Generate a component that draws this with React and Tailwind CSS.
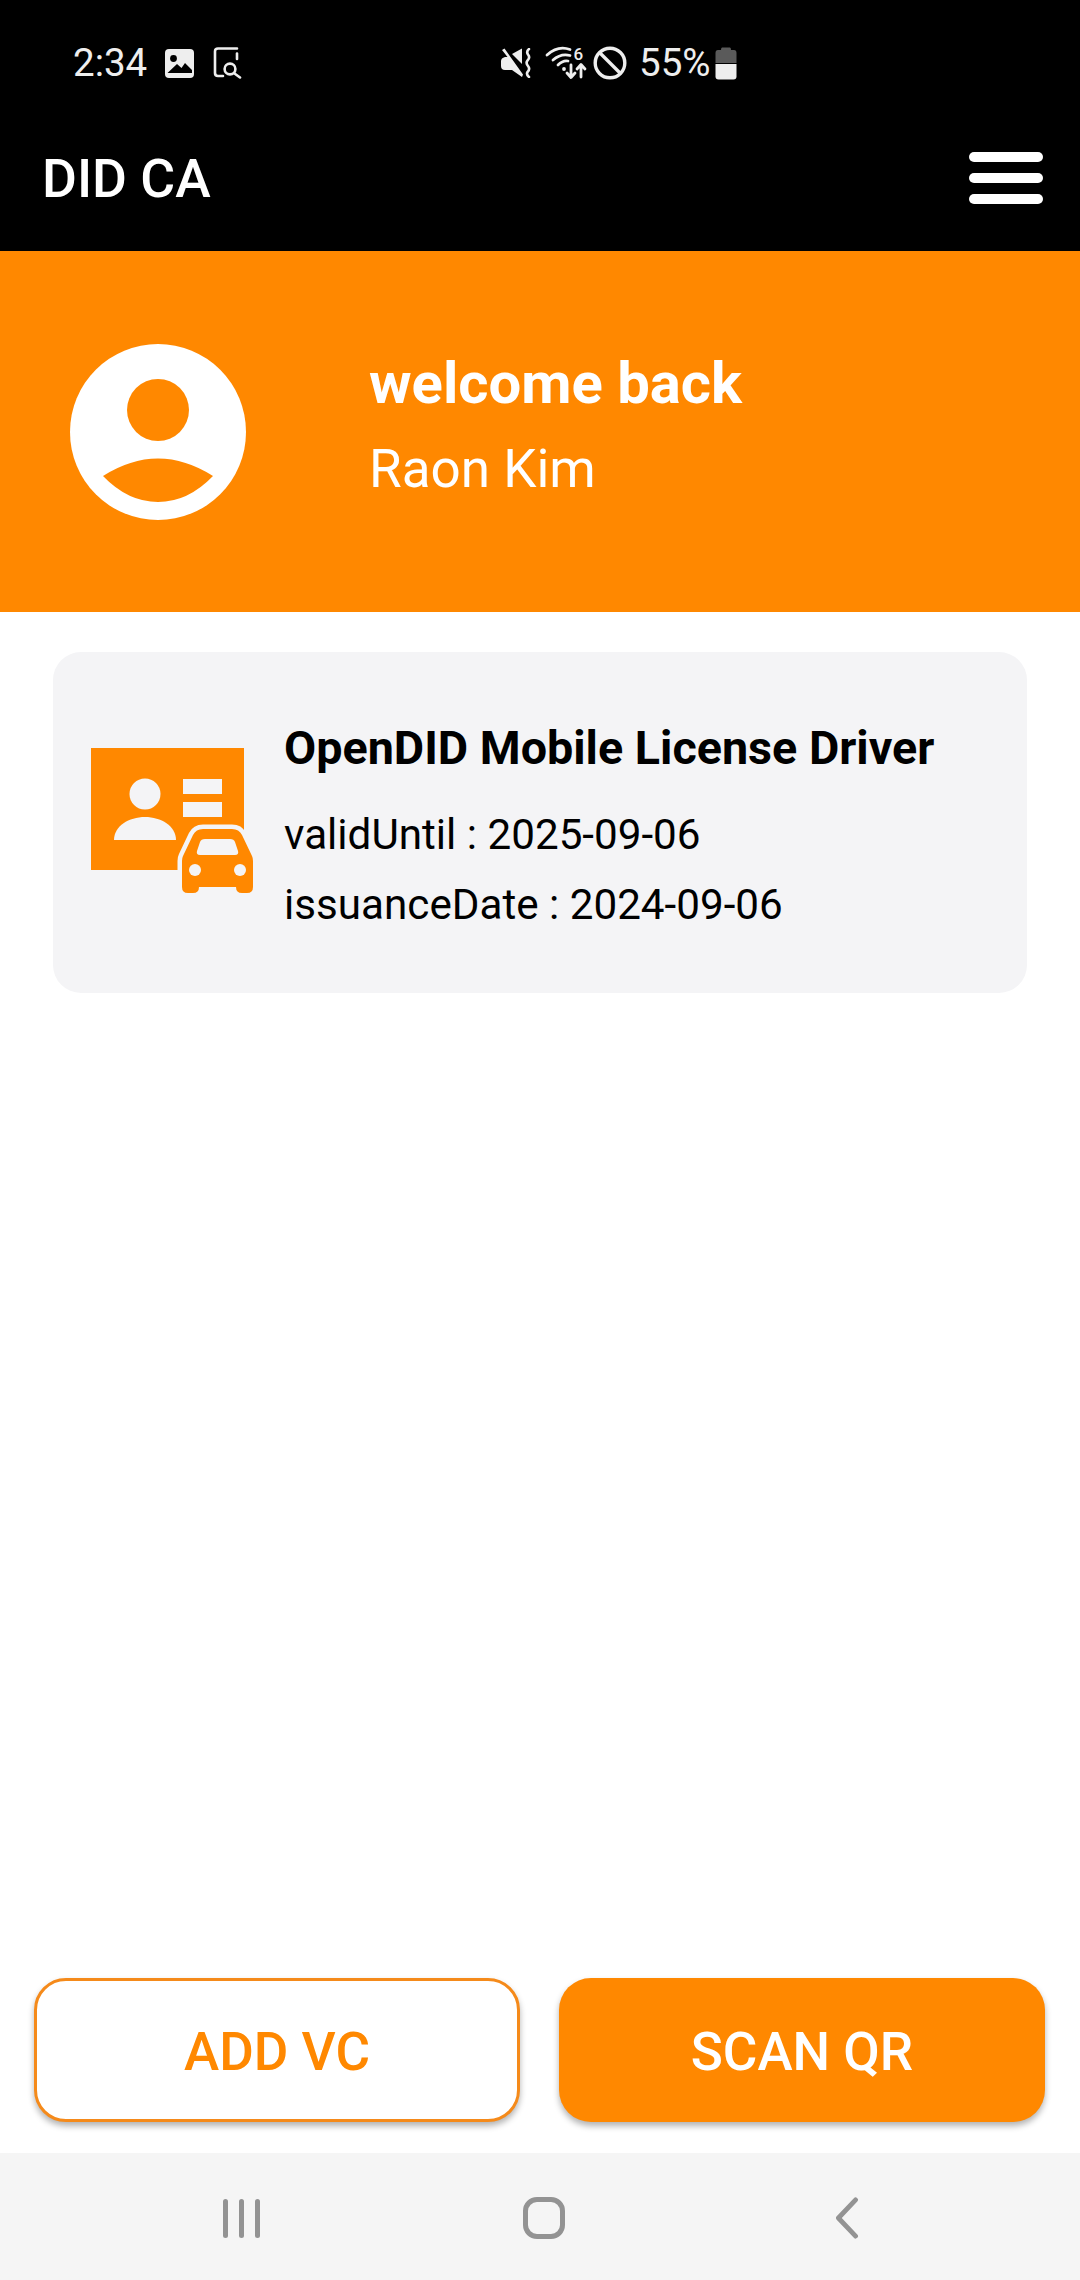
import React from 'react';

const ImageIcon = () => (
  <svg width="29" height="29" viewBox="0 0 29 29">
    <rect width="29" height="29" rx="4" fill="#eeeeee" />
    <circle cx="8.5" cy="9.5" r="3.4" fill="#000" />
    <path d="M2.5 24 L12 15 L16.5 19 L20 14 L27 21 V24 Z" fill="#000" />
  </svg>
);

const ScanDocIcon = () => (
  <svg width="29" height="32" viewBox="0 0 29 32" fill="none" stroke="#eeeeee" strokeWidth="2.6" strokeLinecap="round">
    <path d="M24 1.5 H5 Q2 1.5 2 4.5 V26 Q2 29 5 29 H10" />
    <path d="M24 6.5 V12" />
    <circle cx="17" cy="22" r="5.4" />
    <path d="M21.5 26.5 L27 30.5" />
  </svg>
);

const MuteIcon = () => (
  <svg width="30" height="30" viewBox="0 0 30 30">
    <path d="M1 2 L3.5 0.5 L22 26.5 L21 29 L11 22 H4 Q0 22 0 18 V13 Q0 10 4 9 H6.5 Z" fill="#eeeeee" />
    <path d="M11 6 L21 0.5 V16 Z" fill="#eeeeee" />
    <path d="M28 1 Q25 3.5 27 6.5 Q29.5 9.5 26.5 12.5 Q24.5 15 27 18 Q29.5 21 26.5 24 Q25 26.5 28 29" fill="none" stroke="#eeeeee" strokeWidth="2.6" strokeLinecap="round" />
  </svg>
);

const WifiIcon = () => (
  <svg width="41" height="32" viewBox="0 0 41 32" className="overflow-visible" fill="none" stroke="#eeeeee" strokeWidth="2.8" strokeLinecap="round" strokeLinejoin="round">
    <path d="M1 8 Q12 -2 24 2.5" />
    <path d="M7 13 Q15 6 24 8.5" />
    <path d="M12 18 Q17 13 22 14" />
    <circle cx="18" cy="22" r="1.9" fill="#eeeeee" stroke="none" />
    <text x="27.5" y="12.5" fontFamily="Roboto, sans-serif" fontSize="17" fontWeight="500" fill="#eeeeee" stroke="none">6</text>
    <path d="M25 18 V30 M21 26 L25 30.5 L29 26" />
    <path d="M35 30 V18 M31 22 L35 17.5 L39 22" />
  </svg>
);

const BlockIcon = () => (
  <svg width="34" height="34" viewBox="0 0 34 34" fill="none" stroke="#eeeeee" strokeWidth="3.4">
    <circle cx="17" cy="17" r="14.8" />
    <path d="M6.5 6.5 L27.5 27.5" />
  </svg>
);

const BatteryIcon = () => (
  <svg width="22" height="33" viewBox="0 0 22 33">
    <path d="M7 0.5 H15 Q16 0.5 16 3 H19 Q21.5 3 21.5 6 V16 H0.5 V6 Q0.5 3 3 3 H6 Q6 0.5 7 0.5 Z" fill="#5a5a5a" />
    <path d="M0.5 17 H21.5 V29.5 Q21.5 32.5 18.5 32.5 H3.5 Q0.5 32.5 0.5 29.5 Z" fill="#eeeeee" />
  </svg>
);

const AvatarIcon = () => (
  <svg width="176" height="176" viewBox="0 0 176 176">
    <circle cx="88" cy="88" r="88" fill="#fff" />
    <circle cx="88" cy="66" r="31" fill="#ff8800" />
    <path d="M33 132 Q88 97 143 132 Q118 158 88 158 Q58 158 33 132 Z" fill="#ff8800" />
  </svg>
);

const LicenseIcon = () => (
  <svg width="163" height="146" viewBox="0 0 163 146" className="shrink-0 -mt-[3px]">
    <rect x="0" y="0" width="153" height="122" fill="#ff8800" />
    <circle cx="54" cy="46" r="15.5" fill="#f4f4f6" />
    <path d="M23 92 C23 78 38 69 54 69 C70 69 85 78 85 92 Z" fill="#f4f4f6" />
    <rect x="92" y="31" width="39" height="15" fill="#f4f4f6" />
    <rect x="92" y="54" width="39" height="15" fill="#f4f4f6" />
    <path
      d="M112 81 H141 Q148 81 151 87 L161 108 Q162 110 162 113 V139 Q162 145 156 145 H151 Q145 145 145 139 H108 Q108 145 102 145 H97 Q91 145 91 139 V113 Q91 110 92 108 L102 87 Q105 81 112 81 Z"
      fill="#ff8800"
      stroke="#f4f4f6"
      strokeWidth="9"
      paintOrder="stroke"
    />
    <path d="M114 91 H139 Q143 91 144 94 L147 103 Q148 107 144 107 H109 Q105 107 106 103 L109 94 Q110 91 114 91 Z" fill="#f4f4f6" />
    <circle cx="104" cy="122" r="6" fill="#f4f4f6" />
    <circle cx="149" cy="122" r="6" fill="#f4f4f6" />
  </svg>
);

const App = () => {
  return (
    <div className="w-[1080px] h-[2280px] flex flex-col bg-white font-['Roboto',sans-serif]">
      <div className="bg-black h-[251px] shrink-0">
        <div className="h-[126px] flex items-center pl-[73px] text-[#eeeeee] text-[38.5px]">
          <span className="w-[75px] leading-none">2:34</span>
          <span className="ml-[17px] flex"><ImageIcon /></span>
          <span className="ml-[19px] flex"><ScanDocIcon /></span>
          <span className="ml-[259px] flex"><MuteIcon /></span>
          <span className="ml-[15px] flex"><WifiIcon /></span>
          <span className="ml-[6px] flex"><BlockIcon /></span>
          <span className="ml-[12px] leading-none">55%</span>
          <span className="ml-[5px] flex"><BatteryIcon /></span>
        </div>
        <div className="h-[105px] flex items-center justify-between pl-[42px] pr-[37px]">
          <span className="text-white text-[53.5px] font-medium leading-none">DID CA</span>
          <div className="w-[74px] flex flex-col gap-[11px] -mt-[2px]">
            <div className="h-[10px] rounded-full bg-white" />
            <div className="h-[10px] rounded-full bg-white" />
            <div className="h-[10px] rounded-full bg-white" />
          </div>
        </div>
      </div>

      <div className="bg-[#ff8800] h-[361px] shrink-0 flex items-center pl-[70px]">
        <AvatarIcon />
        <div className="ml-[123px] -mt-[11px] text-white">
          <div className="text-[58px] font-bold leading-[86px]">welcome back</div>
          <div className="text-[53px] font-normal leading-[86px]">Raon Kim</div>
        </div>
      </div>

      <div className="mx-[53px] mt-[40px] h-[341px] rounded-[28px] bg-[#f4f4f6] flex items-center pl-[38px]">
        <LicenseIcon />
        <div className="ml-[30px] mt-[8px] text-black">
          <div className="text-[46.7px] font-bold leading-[70px] -mt-[1px]">OpenDID Mobile License Driver</div>
          <div className="text-[42.2px] leading-[70px] mt-[17px]">validUntil : 2025-09-06</div>
          <div className="text-[42.2px] leading-[70px]">issuanceDate : 2024-09-06</div>
        </div>
      </div>

      <div className="mt-auto flex gap-[39px] pl-[34px] pr-[35px] pb-[31px]">
        <button className="w-[486px] h-[144px] pt-[5px] rounded-[32px] bg-white border-[3px] border-[#f58a1a] shadow-[0_4px_6px_rgba(0,0,0,0.3)] text-[#ff8800] text-[53px] font-medium">
          ADD VC
        </button>
        <button className="w-[486px] h-[144px] pt-[5px] rounded-[32px] bg-[#ff8800] shadow-[0_4px_6px_rgba(0,0,0,0.3)] text-white text-[53px] font-medium">
          SCAN QR
        </button>
      </div>

      <div className="h-[127px] pt-[3px] shrink-0 bg-[#f5f5f5] flex items-center">
        <div className="ml-[223px] flex gap-[11px]">
          <div className="w-[5px] h-[39px] rounded-full bg-[#939393]" />
          <div className="w-[5px] h-[39px] rounded-full bg-[#939393]" />
          <div className="w-[5px] h-[39px] rounded-full bg-[#939393]" />
        </div>
        <div className="ml-[263px] w-[42px] h-[42px] rounded-[14px] border-[5px] border-[#939393]" />
        <svg className="ml-[270px]" width="24" height="42" viewBox="0 0 24 44" fill="none" stroke="#939393" strokeWidth="5" strokeLinecap="round" strokeLinejoin="round">
          <path d="M21 3 L3 22 L21 41" />
        </svg>
      </div>
    </div>
  );
};

export default App;
